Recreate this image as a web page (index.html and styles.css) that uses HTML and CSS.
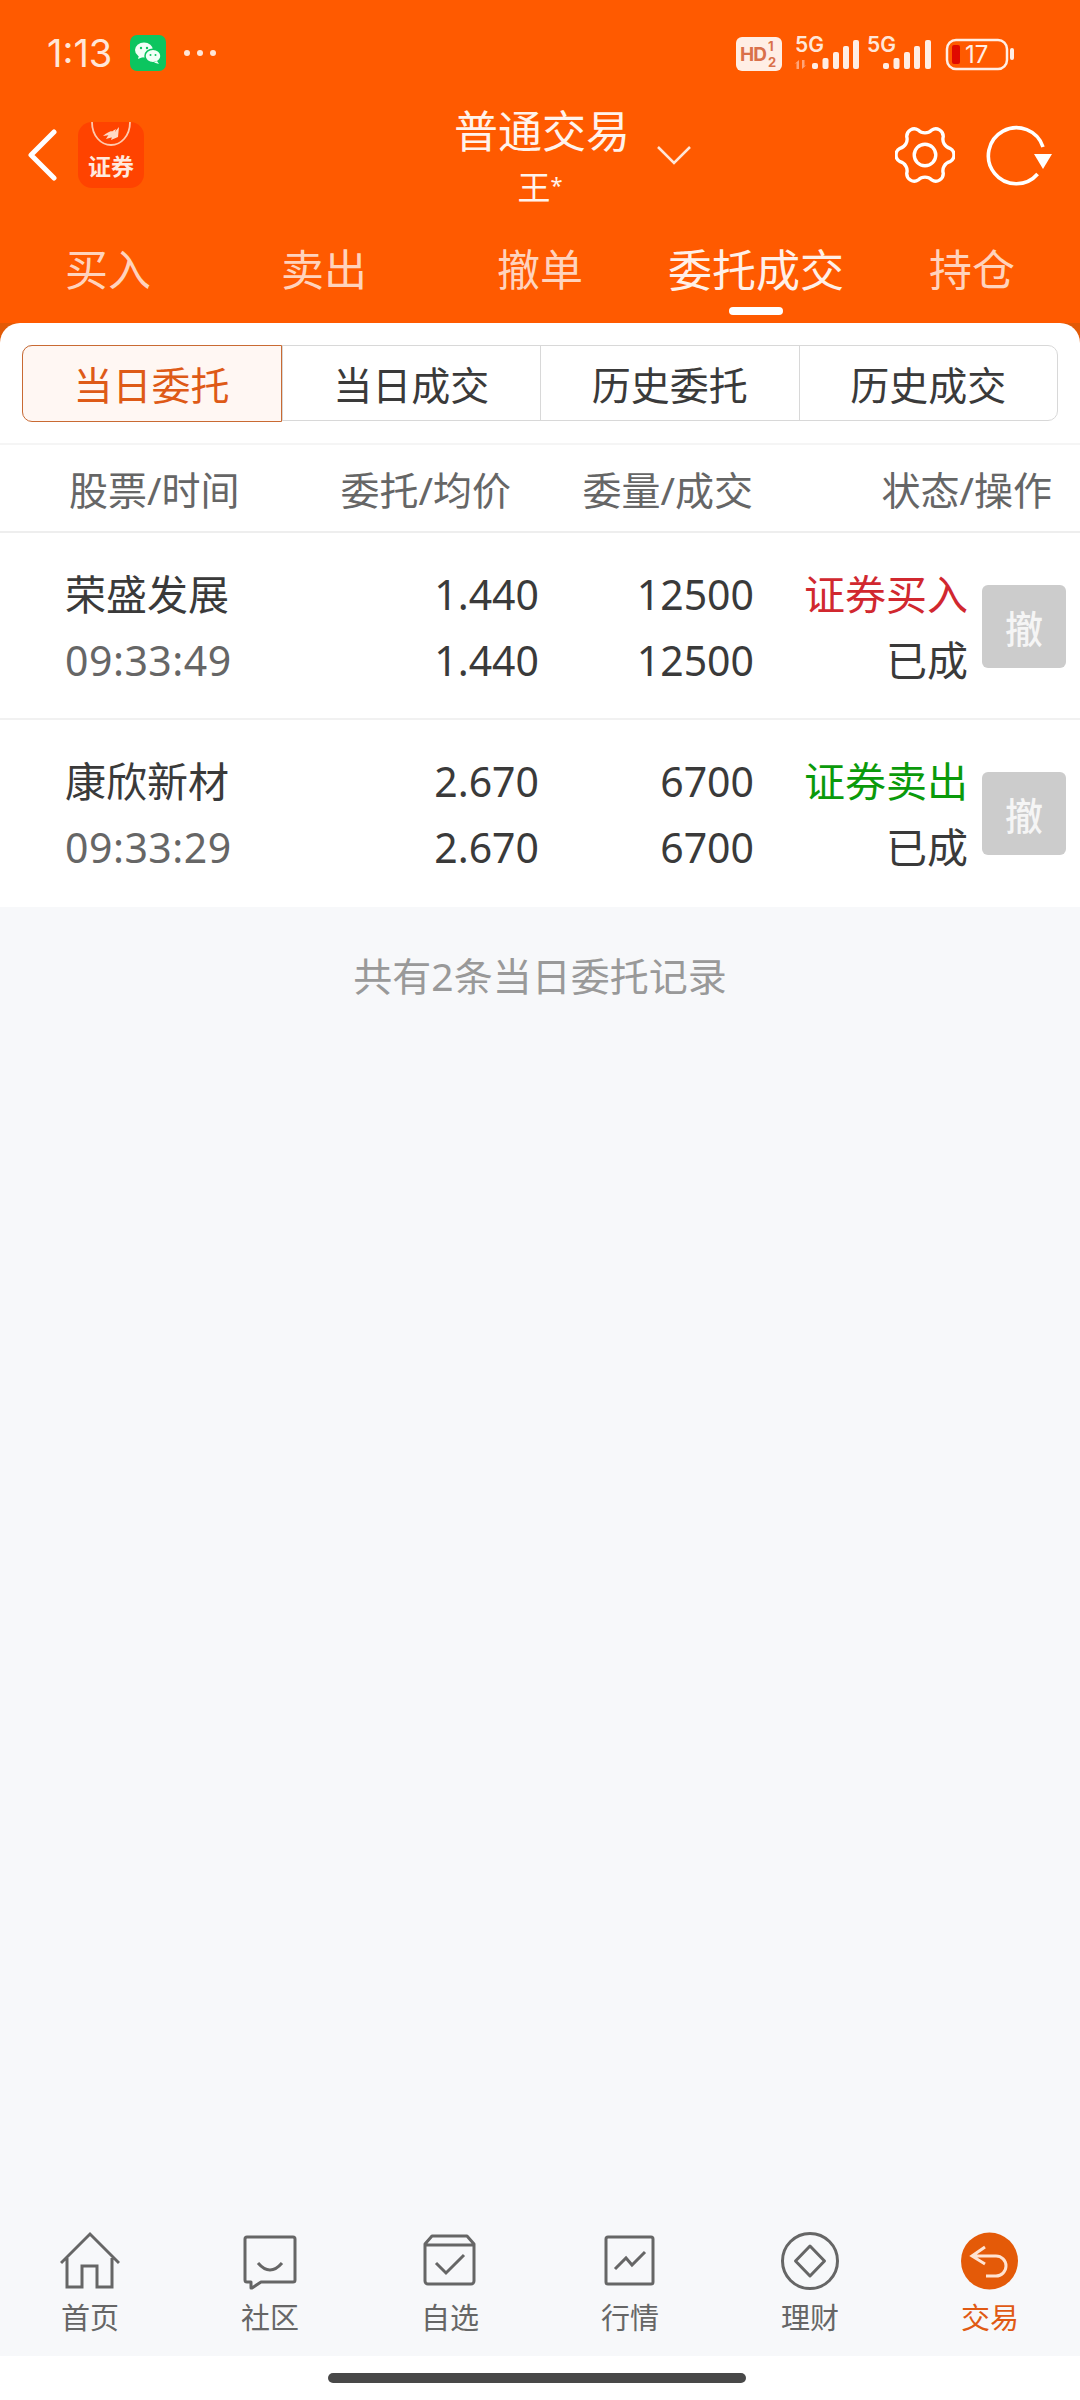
FILE: index.html
```html
<!DOCTYPE html>
<html lang="zh-CN">
  <head>
    <meta charset="UTF-8" />
    <meta name="viewport" content="width=device-width, initial-scale=1.0" />
    <title>普通交易</title>
    <link rel="stylesheet" href="styles.css">
  </head>
  <body>
    <header class="top">
      <div class="status">
        <div class="status-left">
          <span class="clock">1:13</span>
          <svg class="wechat" width="36" height="36" viewBox="0 0 36 36">
            <rect width="36" height="36" rx="7" fill="#0cc55f"/>
            <ellipse cx="14" cy="15" rx="9" ry="7.5" fill="#f2fff7"/>
            <path d="M9 20l-1 4 5-2z" fill="#f2fff7"/>
            <ellipse cx="23" cy="21" rx="8" ry="6.8" fill="#f2fff7" stroke="#0cc55f" stroke-width="1.5"/>
            <path d="M27 26l2 3-5-1.500z" fill="#f2fff7"/>
            <circle cx="11" cy="13" r="1.200" fill="#0cc55f"/>
            <circle cx="17" cy="13" r="1.200" fill="#0cc55f"/>
            <circle cx="20.500" cy="20" r="1" fill="#0cc55f"/>
            <circle cx="25.500" cy="20" r="1" fill="#0cc55f"/>
          </svg>
          <span class="dots"><i></i><i></i><i></i></span>
        </div>
        <svg class="status-right" width="290" height="46" viewBox="0 0 290 46">
          <rect x="6" y="7" width="46" height="34" rx="6" fill="#ffeee5"/>
          <text x="10" y="31" class="st-hd">HD</text>
          <text x="38" y="21" class="st-frac">1</text>
          <text x="38" y="37" class="st-frac">2</text>
          <text x="65" y="22" class="st-5g">5G</text>
          <path d="M69 30v9h-2.500v-6l-2 1zM72 39v-9h2.500v6l2-1z" fill="#ffa478"/>
          <rect x="82" y="33" width="6" height="6" rx="2" fill="#ffeee5"/>
          <rect x="92.500" y="28" width="6" height="11" rx="2" fill="#ffeee5"/>
          <rect x="103" y="22" width="6" height="17" rx="2" fill="#ffeee5"/>
          <rect x="113" y="16" width="6" height="23" rx="2" fill="#ffeee5"/>
          <rect x="123" y="10" width="6" height="29" rx="2" fill="#ffeee5"/>
          <text x="137" y="22" class="st-5g">5G</text>
          <rect x="153" y="33" width="6" height="6" rx="2" fill="#ffeee5"/>
          <rect x="163.500" y="28" width="6" height="11" rx="2" fill="#ffeee5"/>
          <rect x="174" y="22" width="6" height="17" rx="2" fill="#ffeee5"/>
          <rect x="184" y="16" width="6" height="23" rx="2" fill="#ffeee5"/>
          <rect x="195" y="10" width="6" height="29" rx="2" fill="#ffeee5"/>
          <rect x="217" y="10" width="60" height="29" rx="9" fill="none" stroke="#ffeee5" stroke-width="2.500"/>
          <rect x="222" y="15" width="8" height="19" rx="2" fill="#e00a00"/>
          <rect x="280" y="18" width="4" height="12" rx="2" fill="#ffeee5"/>
          <text x="235" y="33" class="st-batt">17</text>
        </svg>
      </div>

      <div class="head">
        <div class="head-left">
          <svg width="30" height="52" viewBox="0 0 30 52" class="back">
            <path d="M27 3L4 26l23 23" fill="none" stroke="#fff" stroke-width="5" stroke-linecap="round" stroke-linejoin="round"/>
          </svg>
          <div class="logo">
            <svg class="logo-mark" width="66" height="28" viewBox="0 0 66 28">
              <path d="M14 0c0 14 9 23 19 23s19-9 19-23" fill="none" stroke="#ffc9ad" stroke-width="1.800"/>
              <path d="M25 14c3-3 7-5 10-5l-3 4zM28 17c2-4 6-8 10-10l-3 8zM33 18c1-4 4-9 8-13l-1 10z" fill="#ffd9c5"/>
            </svg>
            <span class="logo-text">证券</span>
          </div>
        </div>
        <div class="title">
          <div class="title-main">普通交易</div>
          <div class="title-sub">王<span class="star">*</span></div>
        </div>
        <div class="head-right">
          <svg class="caret" width="36" height="20" viewBox="0 0 36 20">
            <path d="M2 2l16 16L34 2" fill="none" stroke="#ffe6d8" stroke-width="2.500"/>
          </svg>
          <div class="head-icons">
            <svg width="60" height="60" viewBox="-2 -2 64 64">
              <path d="M56.560 22.880A8 8 0 0 1 56.560 37.120A10 10 0 0 0 49.450 49.450A8 8 0 0 1 37.120 56.560A10 10 0 0 0 22.880 56.560A8 8 0 0 1 10.550 49.450A10 10 0 0 0 3.440 37.120A8 8 0 0 1 3.440 22.880A10 10 0 0 0 10.550 10.550A8 8 0 0 1 22.880 3.440A10 10 0 0 0 37.120 3.440A8 8 0 0 1 49.450 10.550A10 10 0 0 0 56.560 22.880Z" fill="none" stroke="#fff" stroke-width="3.600"/>
              <circle cx="30" cy="30" r="11.500" fill="none" stroke="#fff" stroke-width="3.600"/>
            </svg>
            <svg width="70" height="70" viewBox="0 0 70 70">
              <path d="M58 27A28 28 0 1 0 52.600 54" fill="none" stroke="#fff" stroke-width="3.600"/>
              <path d="M49 34h18l-9 15z" fill="#fff"/>
            </svg>
          </div>
        </div>
      </div>

      <nav class="tabs">
        <a class="tab">买入</a>
        <a class="tab">卖出</a>
        <a class="tab">撤单</a>
        <a class="tab active">委托成交</a>
        <a class="tab">持仓</a>
      </nav>
    </header>

    <main class="main">
      <section class="card">
        <div class="seg">
          <div class="seg-item active">当日委托</div>
          <div class="seg-item">当日成交</div>
          <div class="seg-item">历史委托</div>
          <div class="seg-item">历史成交</div>
        </div>
        <div class="cols">
          <div>股票/时间</div>
          <div class="right">委托/均价</div>
          <div class="right">委量/成交</div>
          <div class="right">状态/操作</div>
        </div>
        <div class="row">
          <div class="cell"><span>荣盛发展</span><span class="muted">09:33:49</span></div>
          <div class="cell right"><span>1.440</span><span>1.440</span></div>
          <div class="cell right"><span>12500</span><span>12500</span></div>
          <div class="cell right"><span class="buy">证券买入</span><span>已成</span></div>
          <button class="cancel">撤</button>
        </div>
        <div class="row">
          <div class="cell"><span>康欣新材</span><span class="muted">09:33:29</span></div>
          <div class="cell right"><span>2.670</span><span>2.670</span></div>
          <div class="cell right"><span>6700</span><span>6700</span></div>
          <div class="cell right"><span class="sell">证券卖出</span><span>已成</span></div>
          <button class="cancel">撤</button>
        </div>
      </section>
      <p class="summary">共有2条当日委托记录</p>
    </main>

    <nav class="bottom">
      <a class="bottom-item">
        <svg width="60" height="60" viewBox="0 0 60 60">
          <path d="M1 33L30 4l29 29M7 28v29h15V36h15v21h15V28" fill="none" stroke="#666" stroke-width="3"/>
        </svg>
        <span>首页</span>
      </a>
      <a class="bottom-item">
        <svg width="60" height="60" viewBox="0 0 60 60">
          <path d="M7 7h46a2 2 0 0 1 2 2v41a2 2 0 0 1-2 2H21l-9 6h-1v-6H7a2 2 0 0 1-2-2V9a2 2 0 0 1 2-2z" fill="none" stroke="#666" stroke-width="3" stroke-linejoin="round"/>
          <path d="M18 33q12 14 24 0" fill="none" stroke="#666" stroke-width="3"/>
        </svg>
        <span>社区</span>
      </a>
      <a class="bottom-item">
        <svg width="60" height="60" viewBox="0 0 60 60">
          <path d="M12 6h35l7 8v37a3 3 0 0 1-3 3H8a3 3 0 0 1-3-3V14zM5 15h49" fill="none" stroke="#666" stroke-width="3" stroke-linejoin="round"/>
          <path d="M16 33l10 10 18-18" fill="none" stroke="#666" stroke-width="3"/>
        </svg>
        <span>自选</span>
      </a>
      <a class="bottom-item">
        <svg width="60" height="60" viewBox="0 0 60 60">
          <rect x="6" y="7" width="47" height="47" rx="2" fill="none" stroke="#666" stroke-width="3"/>
          <path d="M15 39l11-11 6 7 13-13" fill="none" stroke="#666" stroke-width="3"/>
        </svg>
        <span>行情</span>
      </a>
      <a class="bottom-item">
        <svg width="60" height="60" viewBox="0 0 60 60">
          <circle cx="30" cy="31" r="27.500" fill="none" stroke="#666" stroke-width="3"/>
          <path d="M30 16l14.500 15L30 46 15.500 31z" fill="none" stroke="#666" stroke-width="3" stroke-linejoin="round"/>
        </svg>
        <span>理财</span>
      </a>
      <a class="bottom-item active">
        <svg width="60" height="60" viewBox="0 0 60 60">
          <circle cx="29.500" cy="31" r="28.500" fill="#e45a08"/>
          <path d="M25 17l-13 9 13 8M12 26h24a10 10 0 0 1 0 20H26" fill="none" stroke="#ffe3d2" stroke-width="3"/>
        </svg>
        <span>交易</span>
      </a>
    </nav>
    <div class="gesture"><div class="gesture-bar"></div></div>
  </body>
</html>
```

FILE: styles.css
```css
* {
  box-sizing: border-box;
}
body {
  margin: 0;
  width: 1080px;
  height: 2400px;
  display: flex;
  flex-direction: column;
  font-family: "Noto Sans", "Noto Sans CJK SC", sans-serif;
  color: #3a3a3a;
  background-color: #fff;
}

/* orange header */
.top {
  height: 323px;
  background-color: #ff5a00;
  color: #fff;
}
.status {
  height: 108px;
  padding: 30px 60px 32px 47px;
  display: flex;
  justify-content: space-between;
  align-items: center;
}
.status-left {
  display: flex;
  align-items: center;
}
.clock {
  font-family: Inter, sans-serif;
  font-size: 38px;
  color: #ffe6d8;
  width: 83px;
}
.dots {
  display: flex;
  gap: 7px;
  margin-left: 18px;
}
.dots i {
  width: 6px;
  height: 6px;
  border-radius: 50%;
  background-color: #ffe6d8;
}
.st-hd {
  font: 700 19px Inter, sans-serif;
  letter-spacing: -1px;
  fill: #d9704a;
}
.st-frac {
  font: 700 13px Inter, sans-serif;
  fill: #d9704a;
}
.st-5g {
  font: 600 21px Inter, sans-serif;
  fill: #ffe6d8;
}
.st-batt {
  font: 400 24px Inter, sans-serif;
  fill: #ffeee5;
}

.head {
  height: 114px;
  display: grid;
  grid-template-columns: 1fr 172px 1fr;
  align-items: start;
}
.head-left {
  height: 94px;
  padding-left: 27px;
  display: flex;
  align-items: center;
  gap: 21px;
}
.logo {
  position: relative;
  width: 66px;
  height: 66px;
  border-radius: 14px;
  overflow: hidden;
  background-color: #ff4300;
  display: flex;
  justify-content: center;
  align-items: flex-end;
}
.logo-mark {
  position: absolute;
  top: 0;
  left: 0;
}
.logo-text {
  font-size: 23px;
  line-height: 30px;
  font-weight: 700;
  margin-bottom: 8px;
  color: #ffe9de;
  font-family: "Noto Sans CJK SC", sans-serif;
}
.title {
  text-align: center;
  white-space: nowrap;
}
.title-main {
  font-size: 44px;
  line-height: 46px;
  color: #fff3ec;
}
.title-sub {
  font-size: 33px;
  line-height: 40px;
  margin-top: 10px;
  color: #fff3ec;
}
.star {
  font-size: 22px;
  vertical-align: 7px;
}
.head-right {
  height: 94px;
  padding: 0 25px 0 30px;
  display: flex;
  align-items: center;
  justify-content: space-between;
}
.head-icons {
  display: flex;
  align-items: center;
  gap: 30px;
}

.tabs {
  display: grid;
  grid-template-columns: repeat(5, 1fr);
  height: 101px;
}
.tab {
  display: flex;
  flex-direction: column;
  align-items: center;
  padding-top: 22px;
  font-size: 43px;
  line-height: 52px;
  color: #ffd3bd;
}
.tab.active {
  font-size: 44px;
  color: #fff0e8;
}
.tab.active::after {
  content: "";
  width: 54px;
  height: 8px;
  margin-top: 11px;
  border-radius: 4px;
  background-color: #fff;
}

/* list area */
.main {
  flex: 1;
  background: linear-gradient(#e25a06 0 20px, #f7f8fa 20px);
}
.card {
  background-color: #fff;
  border-radius: 20px 20px 0 0;
  padding-top: 22px;
}
.seg {
  display: grid;
  grid-template-columns: repeat(4, 1fr);
  margin: 0 22px;
  height: 76px;
  border: 1.5px solid #d8d8d8;
  border-radius: 10px;
}
.seg-item {
  display: flex;
  justify-content: center;
  align-items: center;
  font-size: 39px;
  color: #3a3a3a;
  border-left: 1.5px solid #d8d8d8;
}
.seg-item:first-child {
  border-left: none;
}
.seg-item.active {
  margin: -1.5px 0 -1.5px -1.5px;
  border: 1.5px solid #c96a33;
  border-radius: 10px 0 0 10px;
  background-color: #fff7f3;
  color: #de5a17;
}
.cols {
  margin-top: 22px;
  height: 90px;
  padding: 0 28px 0 69px;
  display: grid;
  grid-template-columns: 232px 210px 242px 299px;
  align-items: center;
  font-size: 39px;
  color: #666;
  border-top: 2px solid #f5f5f5;
  border-bottom: 2px solid #eee;
}
.right {
  text-align: right;
}
.row {
  height: 187px;
  padding: 28px 14px 0 65px;
  display: grid;
  grid-template-columns: 214px 260px 215px 214px 98px;
  font-size: 41px;
  line-height: 66px;
  border-bottom: 2px solid #f1f1f1;
}
.row:last-child {
  border-bottom: none;
}
.cell span {
  display: block;
}
.muted {
  color: #666;
  letter-spacing: 0.5px;
}
.buy {
  color: #d1282f;
}
.sell {
  color: #0a9a0a;
}
.cancel {
  width: 84px;
  height: 83px;
  margin: 24px 0 0 14px;
  padding: 0;
  border: none;
  border-radius: 6px;
  background-color: #ccc;
  color: #f5f5f5;
  font-family: inherit;
  font-size: 38px;
  font-weight: 500;
}
.summary {
  margin: 0;
  padding-top: 44px;
  text-align: center;
  font-size: 39px;
  line-height: 50px;
  color: #999;
}

/* bottom navigation */
.bottom {
  height: 126px;
  display: grid;
  grid-template-columns: repeat(6, 1fr);
  background-color: #f7f8fa;
}
.bottom-item {
  display: flex;
  flex-direction: column;
  align-items: center;
  font-size: 29px;
  line-height: 36px;
  color: #666;
}
.bottom-item svg {
  display: block;
  margin-bottom: 10px;
}
.bottom-item.active {
  color: #e05a14;
}
.gesture {
  height: 44px;
  padding: 17px 0 0 328px;
}
.gesture-bar {
  width: 418px;
  height: 10px;
  border-radius: 5px;
  background-color: #484848;
}
```
